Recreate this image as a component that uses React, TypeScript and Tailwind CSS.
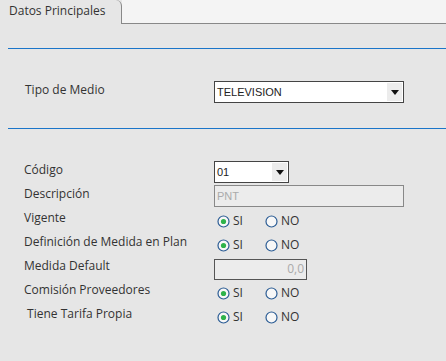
import React from "react";

const Radio = ({ checked }: { checked?: boolean }) => (
  <svg width="13" height="13" viewBox="0 0 13 13" className="shrink-0">
    <circle cx="6.5" cy="6.5" r="5.5" fill="#f7f7f7" stroke="#2c5d95" strokeWidth="1.2" />
    {checked && <circle cx="6.5" cy="6.5" r="2.6" fill="#2fb34a" />}
  </svg>
);

const YesNo = ({ value = "SI" }: { value?: "SI" | "NO" }) => (
  <div className="flex items-center text-[12px] text-[#333] pl-[3px] mt-[2px]">
    <label className="flex items-center gap-[3px] w-[48px]">
      <Radio checked={value === "SI"} />
      <span>SI</span>
    </label>
    <label className="flex items-center gap-[3px]">
      <Radio checked={value === "NO"} />
      <span>NO</span>
    </label>
  </div>
);

const Select = ({ value, width }: { value: string; width: string }) => (
  <div className={`flex items-center h-[22px] bg-white border border-[#444] ${width}`}>
    <span className="flex-1 pl-[2px] text-[11px] text-[#222] font-['Liberation_Sans',sans-serif]">{value}</span>
    <span className="flex items-center justify-center w-[15px] h-[18px] mr-[1px] bg-[#ececec]">
      <svg width="8" height="5" viewBox="0 0 8 5">
        <path d="M0 0h8L4 5z" fill="#111" />
      </svg>
    </span>
  </div>
);

const Row = ({ label, children }: { label: string; children?: React.ReactNode }) => (
  <div className="flex items-center h-[24px]">
    <div className="w-[206px] pl-[16px] whitespace-pre -mt-[5px]">{label}</div>
    {children}
  </div>
);

export default function App() {
  return (
    <div className="w-[446px] h-[361px] bg-[#e6e6e6] text-[12px] text-[#333] font-['Open_Sans',sans-serif] overflow-hidden">
      <div className="flex h-[24px]">
        <div className="w-[122px] border-r border-[#888] rounded-tr-[6px] pl-[9px] pt-[2px] text-[12px] text-[#333]">
          Datos Principales
        </div>
        <div className="flex-1 bg-[#f4f4f4] border-b border-[#888]" />
      </div>

      <div className="pl-[8px]">
        <div className="mt-[24px] h-[1px] bg-[#1b75c9]" />
        <div className="pt-[32px] pb-[25px]">
          <div className="flex items-center h-[22px]">
            <div className="w-[206px] pl-[17px] -mt-[4px]">Tipo de Medio</div>
            <Select value="TELEVISION" width="w-[190px]" />
          </div>
        </div>
        <div className="h-[1px] bg-[#1b75c9]" />

        <div className="pt-[31px]">
          <Row label="Código">
            <Select value="01" width="w-[75px]" />
          </Row>
          <Row label="Descripción">
            <div className="h-[22px] w-[190px] border border-[#888] bg-[#ececec] pl-[2px] flex items-center text-[11px] text-[#aaa] font-['Liberation_Sans',sans-serif]">
              PNT
            </div>
          </Row>
          <Row label="Vigente">
            <YesNo />
          </Row>
          <Row label="Definición de Medida en Plan">
            <YesNo />
          </Row>
          <Row label="Medida Default">
            <div className="h-[21px] w-[93px] mt-[2px] border border-[#555] bg-[#ececec] pr-[2px] flex items-center justify-end text-[12px] text-[#aaa]">
              0,0
            </div>
          </Row>
          <Row label="Comisión Proveedores">
            <YesNo />
          </Row>
          <Row label=" Tiene Tarifa Propia">
            <YesNo />
          </Row>
        </div>
      </div>
    </div>
  );
}
